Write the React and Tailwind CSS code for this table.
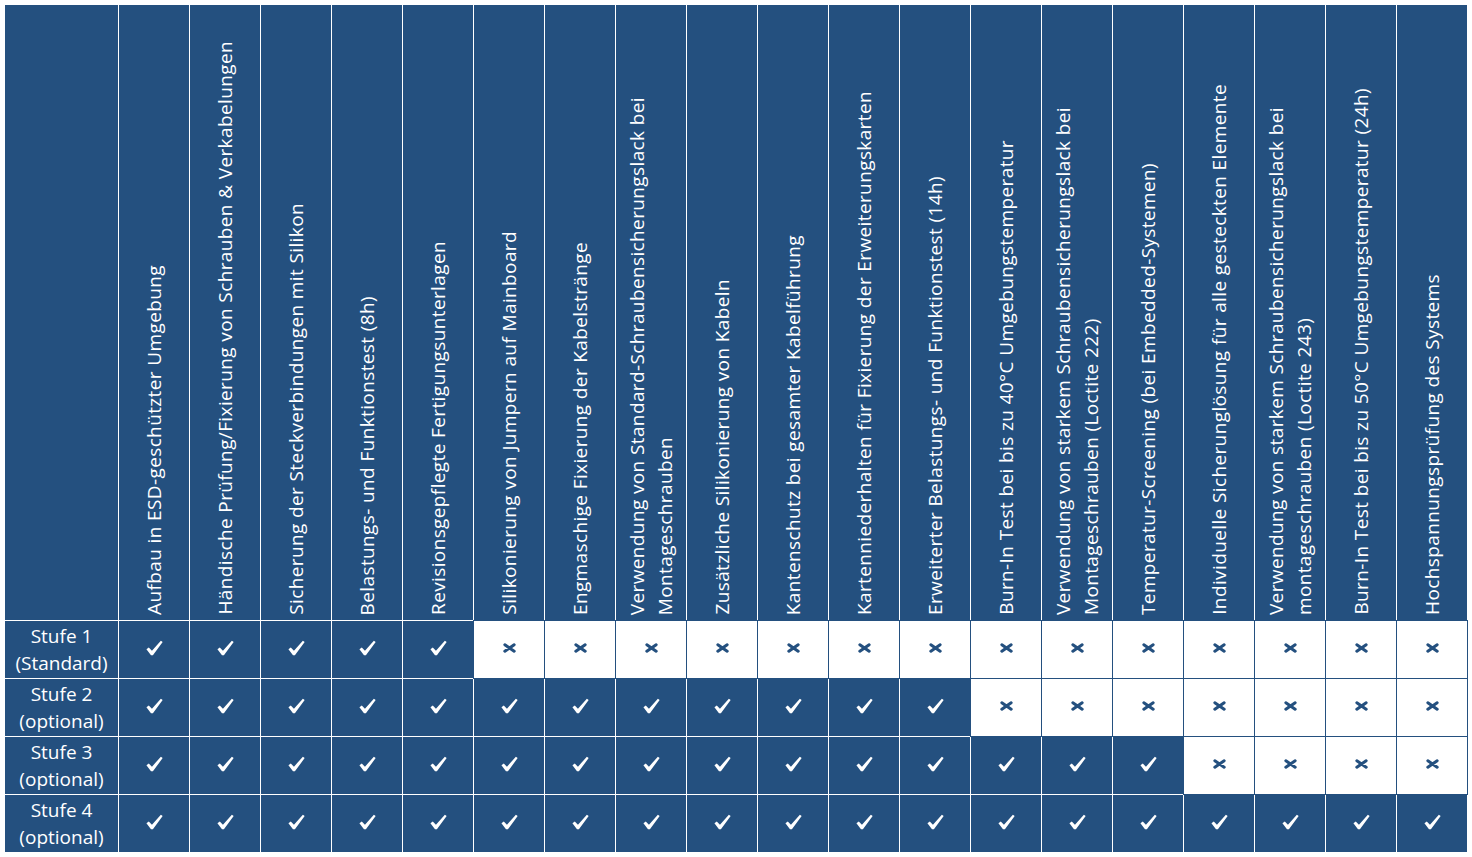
const headers = [
  ['Aufbau in ESD-geschützter Umgebung'],
  ['Händische Prüfung/Fixierung von Schrauben & Verkabelungen'],
  ['Sicherung der Steckverbindungen mit Silikon'],
  ['Belastungs- und Funktionstest (8h)'],
  ['Revisionsgepflegte Fertigungsunterlagen'],
  ['Silikonierung von Jumpern auf Mainboard'],
  ['Engmaschige Fixierung der Kabelstränge'],
  ['Verwendung von Standard-Schraubensicherungslack bei', 'Montageschrauben'],
  ['Zusätzliche Silikonierung von Kabeln'],
  ['Kantenschutz bei gesamter Kabelführung'],
  ['Kartenniederhalten für Fixierung der Erweiterungskarten'],
  ['Erweiterter Belastungs- und Funktionstest (14h)'],
  ['Burn-In Test bei bis zu 40°C Umgebungstemperatur'],
  ['Verwendung von starkem Schraubensicherungslack bei', 'Montageschrauben (Loctite 222)'],
  ['Temperatur-Screening (bei Embedded-Systemen)'],
  ['Individuelle Sicherunglösung für alle gesteckten Elemente'],
  ['Verwendung von starkem Schraubensicherungslack bei', 'montageschrauben (Loctite 243)'],
  ['Burn-In Test bei bis zu 50°C Umgebungstemperatur (24h)'],
  ['Hochspannungsprüfung des Systems'],
];

// how many columns each level includes
const levels = [
  { name: 'Stufe 1', sub: '(Standard)', count: 5 },
  { name: 'Stufe 2', sub: '(optional)', count: 12 },
  { name: 'Stufe 3', sub: '(optional)', count: 15 },
  { name: 'Stufe 4', sub: '(optional)', count: 19 },
];

function Check() {
  return (
    <svg width="17" height="16" viewBox="0 0 16 15" className="-translate-y-[2px]">
      <path d="M0.4 8.7 L2.6 7 L5.6 10 L14 0.6 L15.7 1.9 L6.5 14.4 L4.7 14.4 Z" fill="#ffffff" />
    </svg>
  );
}

function Cross() {
  return (
    <svg width="13" height="10" viewBox="0 0 12 9" className="-translate-y-[2px]">
      <path d="M1.7 1.5 L10.3 7.5 M10.3 1.5 L1.7 7.5" stroke="#24507f" strokeWidth="2.8" strokeLinecap="round" />
    </svg>
  );
}

export default function App() {
  return (
    <div className="min-h-screen bg-white p-[5px] font-['Open_Sans',sans-serif] text-[19px] text-white">
      <div className="grid w-fit grid-cols-[113px_repeat(19,70px)] grid-rows-[615px_repeat(4,57px)] gap-px bg-white">
        <div className="bg-[#24507f]" />
        {headers.map((lines, i) => (
          <div key={i} className="flex items-end justify-center bg-[#24507f] pb-[5px]">
            <div className="rotate-180 whitespace-nowrap leading-[28px] tracking-[0.02em] [writing-mode:vertical-rl]">
              {lines.map((l) => (
                <div key={l}>{l}</div>
              ))}
            </div>
          </div>
        ))}
        {levels.map((lvl) => (
          <>
            <div key={lvl.name} className="flex flex-col items-center justify-center bg-[#24507f] leading-[27px]">
              <span>{lvl.name}</span>
              <span>{lvl.sub}</span>
            </div>
            {headers.map((_, i) =>
              i < lvl.count ? (
                <div key={lvl.name + i} className="flex items-center justify-center bg-[#24507f]">
                  <Check />
                </div>
              ) : (
                <div key={lvl.name + i} className="flex items-center justify-center bg-white outline outline-1 outline-[#24507f]">
                  <Cross />
                </div>
              )
            )}
          </>
        ))}
      </div>
    </div>
  );
}
